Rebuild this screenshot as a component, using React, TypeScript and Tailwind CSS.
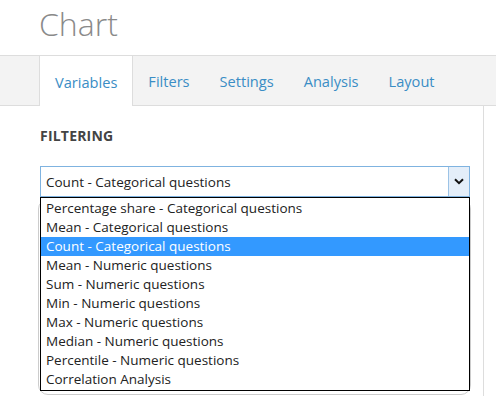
import React from "react";

const tabs = ["Variables", "Filters", "Settings", "Analysis", "Layout"];
const options = [
  "Percentage share - Categorical questions",
  "Mean - Categorical questions",
  "Count - Categorical questions",
  "Mean - Numeric questions",
  "Sum - Numeric questions",
  "Min - Numeric questions",
  "Max - Numeric questions",
  "Median - Numeric questions",
  "Percentile - Numeric questions",
  "Correlation Analysis",
];

export default function App() {
  return (
    <div
      className="w-[496px] h-[396px] overflow-hidden bg-white relative"
      style={{ fontFamily: '"Open Sans", sans-serif' }}
    >
      <div className="pl-[39px] pt-[4px] h-[55px]">
        <h1 className="text-[32px] leading-[40px] font-light text-[#8a8a8a]">Chart</h1>
      </div>
      <div className="h-[51px] bg-[#f3f3f3] border-t border-b border-[#dddddd] flex pl-[39px]">
        {tabs.map((t, i) => (
          <div
            key={t}
            className={
              i === 0
                ? "px-[15px] pt-[3px] h-[50px] -mb-px bg-white border-l border-r border-[#dddddd] flex items-center text-[14.6px] text-[#3a8dc5]"
                : "px-[15px] pt-[3px] h-[49px] flex items-center text-[14.6px] text-[#3a8dc5]"
            }
          >
            {t}
          </div>
        ))}
      </div>
      <div className="flex">
        <div className="w-[483px] pl-[40px] pr-[13px]">
          <div className="pt-[20px] text-[14px] leading-[20px] font-bold text-[#444444] tracking-[0.2px]">
            FILTERING
          </div>
          <div className="relative mt-[20px] w-[430px]">
            <div className="h-[31px] border border-[#7fb3e0] flex items-center justify-between bg-white">
              <span className="pl-[5px] pt-[2px] text-[13.5px] text-[#222222]">Count - Categorical questions</span>
              <div className="w-[21px] h-[29px] bg-[#e4eef9] border-l border-[#9cc3e6] flex items-center justify-center">
                <svg width="10" height="7" viewBox="0 0 10 7">
                  <path d="M1 1.2 L5 5.2 L9 1.2" fill="none" stroke="#111" strokeWidth="2" />
                </svg>
              </div>
            </div>
            <div className="mt-[2px] -ml-[2px] w-[433px] h-[196px] border border-[#cccccc] rounded-[10px]" />
            <div className="absolute left-0 top-[31px] w-[430px] border border-black bg-white py-px">
              {options.map((o, i) => (
                <div
                  key={o}
                  className={
                    i === 2
                      ? "h-[19px] leading-[19px] pl-[5px] text-[13.5px] bg-[#3399ff] text-white"
                      : "h-[19px] leading-[19px] pl-[5px] text-[13.5px] text-[#222222]"
                  }
                >
                  {o}
                </div>
              ))}
            </div>
          </div>
        </div>
        <div className="w-px h-[300px] bg-[#dddddd]" />
      </div>
    </div>
  );
}
